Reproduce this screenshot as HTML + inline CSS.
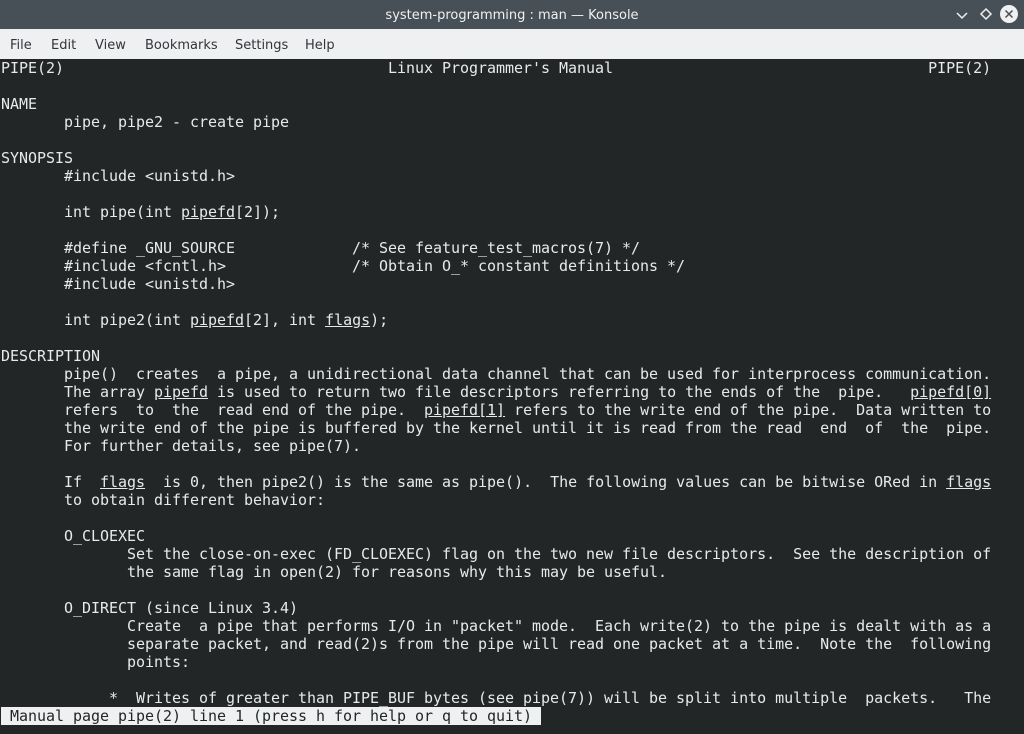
<!DOCTYPE html>
<html><head><meta charset="utf-8"><style>
html,body{margin:0;padding:0;width:1024px;height:734px;overflow:hidden;background:#232627}
#title{position:absolute;left:0;top:1px;width:1024px;height:29px;background:#475057;color:#eff0f1;font:13px "DejaVu Sans","Liberation Sans",sans-serif;text-align:center;line-height:29px}
#bar{position:absolute;left:0;top:0;width:1024px;height:29px;background:#475057}
#menu{position:absolute;left:0;top:29px;width:1024px;height:30px;background:#eff0f1;color:#31363b;font:13px "DejaVu Sans","Liberation Sans",sans-serif;line-height:30px}
#menu span{position:absolute;top:2px}
#term{position:absolute;left:1px;top:59px;margin:0;font:15px/18px "DejaVu Sans Mono","Liberation Mono",monospace;letter-spacing:-0.03px;color:#e8e9ea;white-space:pre}
u{text-decoration:underline}
.st{background:#eff0f1;color:#232627}
</style></head><body>
<div id="bar"></div>
<div id="title">system-programming : man — Konsole</div>
<svg style="position:absolute;left:955px;top:5px" width="66" height="20">
<path d="M2 8 L7 13 L12 8" stroke="#eff0f1" stroke-width="1.5" fill="none"/>
<path d="M31 4 L36 9 L31 14 L26 9 Z" stroke="#eff0f1" stroke-width="1.5" fill="none"/>
<circle cx="54" cy="9" r="9" fill="#eff0f1"/>
<path d="M50.5 5.5 L57.5 12.5 M57.5 5.5 L50.5 12.5" stroke="#475057" stroke-width="1.5"/>
</svg>
<div id="menu"><span style="left:10px">File</span><span style="left:51px">Edit</span><span style="left:95px">View</span><span style="left:145px">Bookmarks</span><span style="left:235px">Settings</span><span style="left:305px">Help</span></div>
<pre id="term">PIPE(2)                                    Linux Programmer's Manual                                   PIPE(2)

NAME
       pipe, pipe2 - create pipe

SYNOPSIS
       #include &lt;unistd.h&gt;

       int pipe(int <u>pipefd</u>[2]);

       #define _GNU_SOURCE             /* See feature_test_macros(7) */
       #include &lt;fcntl.h&gt;              /* Obtain O_* constant definitions */
       #include &lt;unistd.h&gt;

       int pipe2(int <u>pipefd</u>[2], int <u>flags</u>);

DESCRIPTION
       pipe()  creates  a pipe, a unidirectional data channel that can be used for interprocess communication.
       The array <u>pipefd</u> is used to return two file descriptors referring to the ends of the  pipe.   <u>pipefd[0]</u>
       refers  to  the  read end of the pipe.  <u>pipefd[1]</u> refers to the write end of the pipe.  Data written to
       the write end of the pipe is buffered by the kernel until it is read from the read  end  of  the  pipe.
       For further details, see pipe(7).

       If  <u>flags</u>  is 0, then pipe2() is the same as pipe().  The following values can be bitwise ORed in <u>flags</u>
       to obtain different behavior:

       O_CLOEXEC
              Set the close-on-exec (FD_CLOEXEC) flag on the two new file descriptors.  See the description of
              the same flag in open(2) for reasons why this may be useful.

       O_DIRECT (since Linux 3.4)
              Create  a pipe that performs I/O in "packet" mode.  Each write(2) to the pipe is dealt with as a
              separate packet, and read(2)s from the pipe will read one packet at a time.  Note the  following
              points:

            *  Writes of greater than PIPE_BUF bytes (see pipe(7)) will be split into multiple  packets.   The
<span class="st"> Manual page pipe(2) line 1 (press h for help or q to quit) </span></pre>
</body></html>
